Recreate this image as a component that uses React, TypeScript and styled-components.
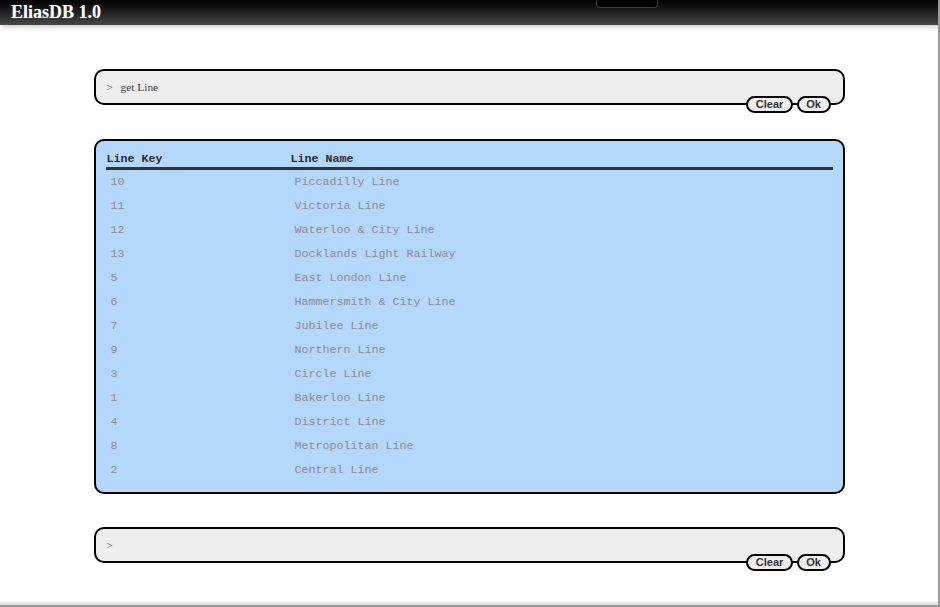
import React from "react";
import styled, { createGlobalStyle } from "styled-components";

const Global = createGlobalStyle`
  html, body { margin: 0; padding: 0; background: #fff; }
  body { font-family: "Liberation Serif", serif; }
`;

const Frame = styled.div`
  position: relative;
  box-sizing: border-box;
  width: 940px;
  height: 607px;
  border-right: 2px solid #9a9a9a;
  border-bottom: 2px solid #9a9a9a;
  box-shadow: inset 0 -3px 0 #e4e4e4;
  overflow: hidden;
`;

const Header = styled.header`
  position: relative;
  height: 25px;
  background: linear-gradient(to bottom, #000 0%, #161616 35%, #474747 100%);
  box-shadow: 2px 2px 5px rgba(0, 0, 0, 0.2);
  display: flex;
  align-items: center;
  padding-left: 11px;
`;

const Title = styled.h1`
  margin: 0;
  font-family: "Liberation Serif", serif;
  font-weight: bold;
  font-size: 18px;
  line-height: 25px;
  color: #fff;
  text-shadow: 0 0 1px rgba(255, 255, 255, 0.3);
`;

const Tab = styled.div`
  position: absolute;
  left: 596px;
  top: 0;
  width: 60px;
  height: 7px;
  background: #000;
  border: 1px solid #3a3a3a;
  border-top: none;
  border-radius: 0 0 4px 4px;
`;

const Main = styled.main`
  width: 751px;
  margin: 0 auto;
  padding-top: 44px;
  display: flex;
  flex-direction: column;
`;

const ConsoleBox = styled.div<{ $top: number }>`
  position: relative;
  box-sizing: border-box;
  height: 36px;
  margin-top: ${(p) => p.$top}px;
  border: 2px solid #000;
  border-radius: 10px;
  background: #eeeeee;
  display: flex;
  align-items: center;
  padding-left: 11px;
  font-family: "Liberation Serif", serif;
  font-size: 11px;
  color: #555;
`;

const Prompt = styled.span`
  width: 14px;
  flex: none;
`;

const Command = styled.span`
  font-size: 11.4px;
  color: #444;
`;

const ButtonBar = styled.div`
  position: absolute;
  right: 12px;
  bottom: -10px;
  display: flex;
  gap: 4px;
`;

const Button = styled.button`
  box-sizing: border-box;
  height: 17px;
  padding: 0 7.5px;
  border: 2px solid #000;
  border-radius: 9px;
  background: #eeeeee;
  font-family: "Liberation Sans", Arial, sans-serif;
  font-weight: bold;
  font-size: 11px;
  line-height: 13px;
  color: #333;
  cursor: pointer;
`;

const ResultBox = styled.div`
  box-sizing: border-box;
  margin-top: 34px;
  border: 2px solid #000;
  border-radius: 10px;
  background: #b4d8fc;
  padding: 10px;
`;

const Table = styled.div`
  display: grid;
  grid-template-columns: 184px 1fr;
  font-family: "Liberation Mono", "Courier New", monospace;
  font-size: 11.67px;
`;

const HeadCell = styled.div`
  height: 16px;
  line-height: 16px;
  padding-left: 1px;
  font-weight: bold;
  color: #2a2a2a;
  border-bottom: 3px solid #333;
`;

const Cell = styled.div`
  height: 24px;
  line-height: 24px;
  padding-left: 5px;
  color: #8c8c8c;
  white-space: pre;
`;

const rows: [string, string][] = [
  ["10", "Piccadilly Line"],
  ["11", "Victoria Line"],
  ["12", "Waterloo & City Line"],
  ["13", "Docklands Light Railway"],
  ["5", "East London Line"],
  ["6", "Hammersmith & City Line"],
  ["7", "Jubilee Line"],
  ["9", "Northern Line"],
  ["3", "Circle Line"],
  ["1", "Bakerloo Line"],
  ["4", "District Line"],
  ["8", "Metropolitan Line"],
  ["2", "Central Line"],
];

const Console = ({ text, top }: { text?: string; top: number }) => (
  <ConsoleBox $top={top}>
    <Prompt>&gt;</Prompt>
    {text ? <Command>{text}</Command> : null}
    <ButtonBar>
      <Button>Clear</Button>
      <Button>Ok</Button>
    </ButtonBar>
  </ConsoleBox>
);

export default function App() {
  return (
    <>
      <Global />
      <Frame>
        <Header>
          <Title>EliasDB 1.0</Title>
          <Tab />
        </Header>
        <Main>
          <Console text="get Line" top={0} />
          <ResultBox>
            <Table>
              <HeadCell>Line Key</HeadCell>
              <HeadCell>Line Name</HeadCell>
              {rows.map(([k, n]) => (
                <React.Fragment key={k}>
                  <Cell>{k}</Cell>
                  <Cell>{n}</Cell>
                </React.Fragment>
              ))}
            </Table>
          </ResultBox>
          <Console top={33} />
        </Main>
      </Frame>
    </>
  );
}
